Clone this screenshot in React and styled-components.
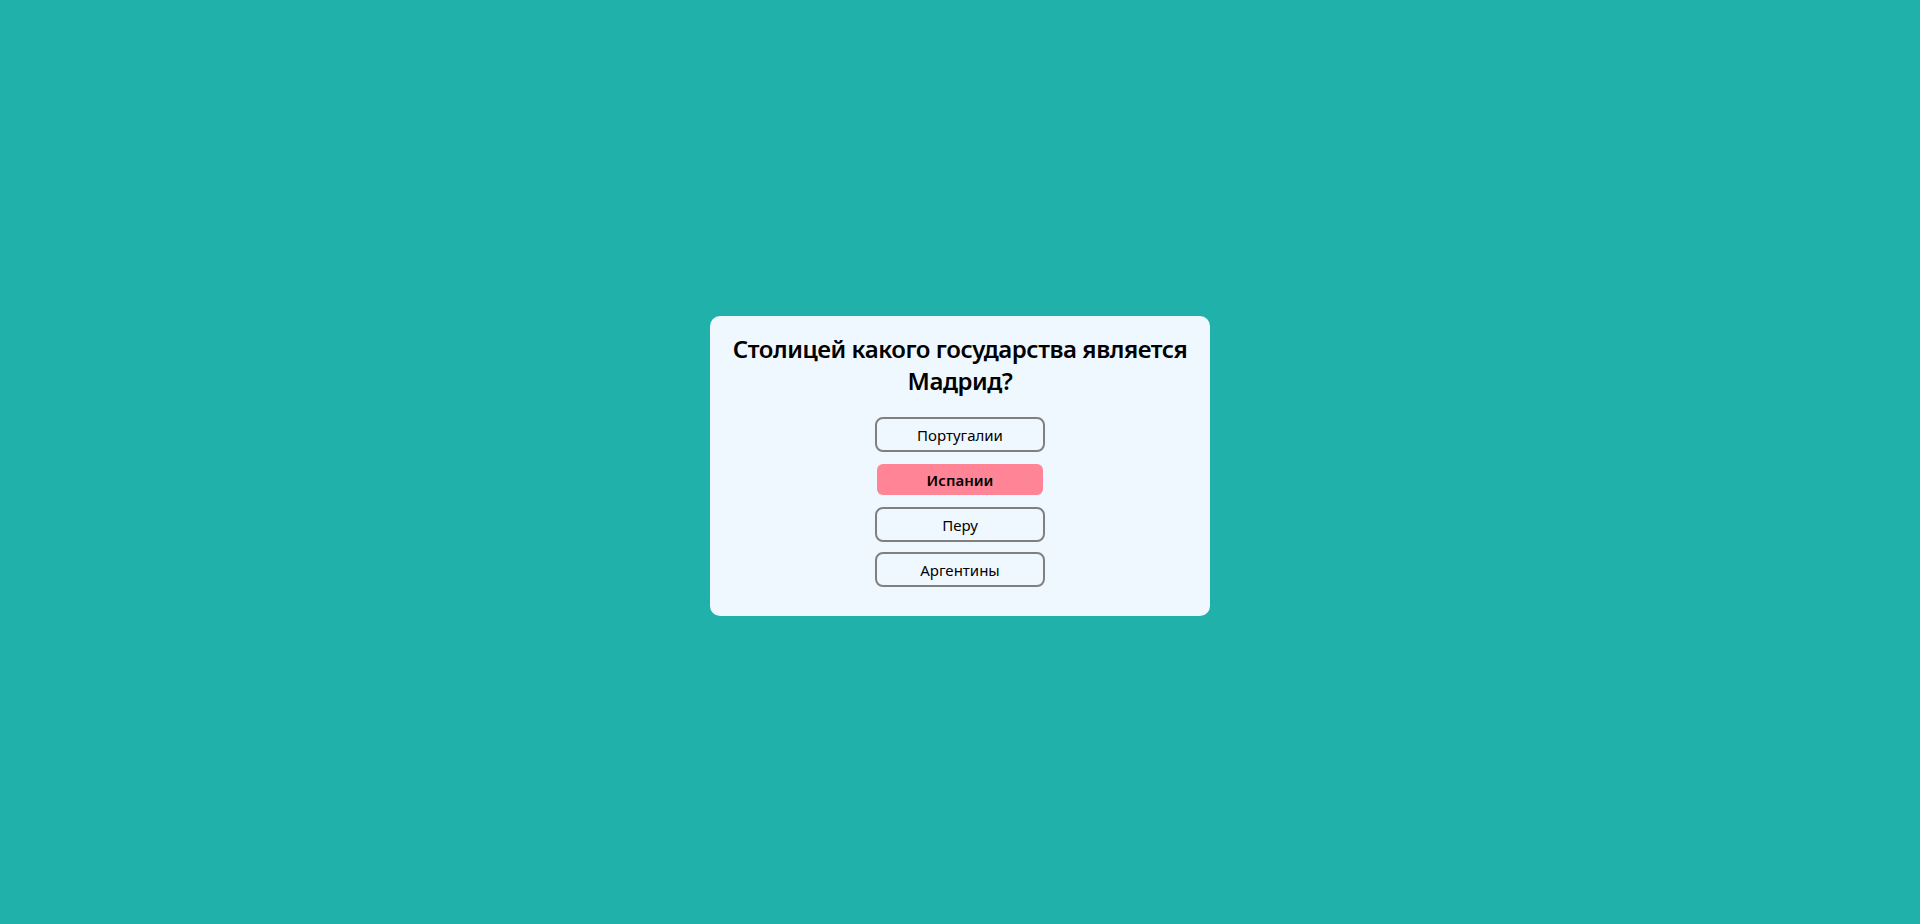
import React, { useState } from 'react';
import styled, { createGlobalStyle } from 'styled-components';

const teal = '#20b2aa';
const alice = '#f0f8ff';
const pink = '#ff8596';
const gray = '#808080';

const GlobalStyle = createGlobalStyle`
  html, body {
    margin: 0;
    padding: 0;
    background: ${teal};
  }
  body {
    font-family: 'Noto Sans', 'Open Sans', sans-serif;
  }
`;

const answers = ['Португалии', 'Испании', 'Перу', 'Аргентины'];

const App = () => {
  const [selected, setSelected] = useState(1);

  return (
    <Page>
      <GlobalStyle />
      <Card>
        <Question>Столицей какого государства является Мадрид?</Question>
        <Answers>
          {answers.map((a, i) => (
            <AnswerButton key={a} active={i === selected} onClick={() => setSelected(i)}>
              {a}
            </AnswerButton>
          ))}
        </Answers>
      </Card>
    </Page>
  );
};

const Page = styled.div`
  min-height: 100vh;
  box-sizing: border-box;
  padding-top: 8px;
  display: flex;
  justify-content: center;
  align-items: center;
  background: ${teal};
`;

const Card = styled.div`
  width: 500px;
  box-sizing: border-box;
  padding: 17px 16px 29px;
  background: ${alice};
  border-radius: 10px;
  display: flex;
  flex-direction: column;
  align-items: center;
`;

const Question = styled.h2`
  margin: 0 0 20px;
  font-size: 24px;
  line-height: 32px;
  font-weight: 600;
  letter-spacing: -0.45px;
  color: #000;
  text-align: center;
`;

const Answers = styled.div`
  display: flex;
  flex-direction: column;
  align-items: center;
  gap: 10px;
`;

const AnswerButton = styled.button`
  width: 170px;
  height: 35px;
  box-sizing: border-box;
  border-radius: 8px;
  border: 2px solid ${p => (p.active ? 'transparent' : gray)};
  background: ${p => (p.active ? pink : 'transparent')};
  background-clip: padding-box;
  font-family: 'Noto Sans', 'Open Sans', sans-serif;
  font-size: 15px;
  font-weight: ${p => (p.active ? 600 : 400)};
  color: #000;
  padding: 0;
  cursor: pointer;
`;

export default App;
